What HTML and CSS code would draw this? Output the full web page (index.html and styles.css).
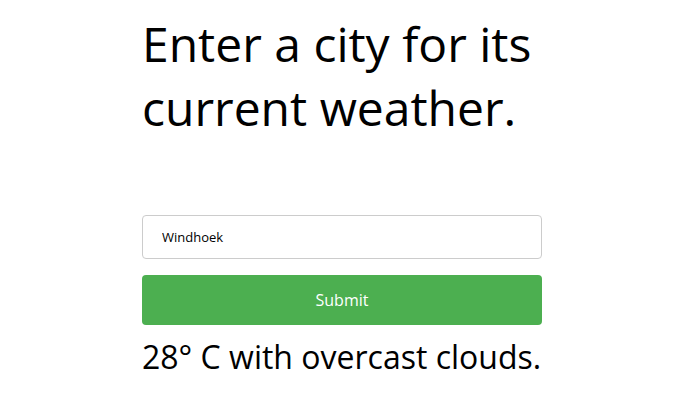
FILE: index.html
```html
<!DOCTYPE html>
<html lang="en">
<head>
<meta charset="utf-8">
<title>Weather</title>
<link rel="stylesheet" href="styles.css">
</head>
<body>
<main class="app">
  <h1 class="title">Enter a city for its current weather.</h1>
  <form class="form">
    <input class="city" type="text" value="Windhoek">
    <button class="submit" type="button">Submit</button>
  </form>
  <p class="result">28° C with overcast clouds.</p>
</main>
</body>
</html>
```
FILE: styles.css
```css
* { box-sizing: border-box; }
html, body { margin: 0; padding: 0; background: #fff; }
body { font-family: "Open Sans", sans-serif; color: #000; }
.app {
  width: 404px;
  margin: 0 auto;
  padding: 12px 4px 0 0;
  display: flex;
  flex-direction: column;
}
.title {
  margin: 0;
  font-size: 48px;
  font-weight: 400;
  line-height: 64px;
}
.form {
  margin-top: 75px;
  display: flex;
  flex-direction: column;
  gap: 16px;
}
.city {
  height: 44px;
  border: 1px solid #ccc;
  border-radius: 4px;
  padding: 0 19px;
  font-family: "Open Sans", sans-serif;
  font-size: 13px;
  color: #000;
  outline: none;
}
.submit {
  height: 50px;
  border: none;
  border-radius: 4px;
  background: #4caf50;
  color: #fff;
  font-family: "Open Sans", sans-serif;
  font-size: 16px;
}
.result {
  margin: 12px 0 0;
  font-size: 32px;
  line-height: 40px;
}
```
